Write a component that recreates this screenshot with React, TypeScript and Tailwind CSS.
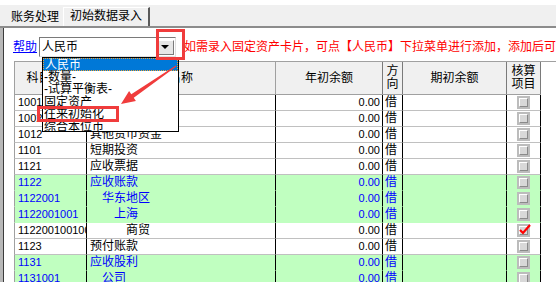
import React from "react";

type Row = {
  code: string;
  name: string;
  indent: number;
  green: boolean;
  checked?: boolean;
};

const rows: Row[] = [
  { code: "1001", name: "现金", indent: 0, green: false },
  { code: "1002", name: "银行存款", indent: 0, green: false },
  { code: "1012", name: "其他货币资金", indent: 0, green: false },
  { code: "1101", name: "短期投资", indent: 0, green: false },
  { code: "1121", name: "应收票据", indent: 0, green: false },
  { code: "1122", name: "应收账款", indent: 0, green: true },
  { code: "1122001", name: "华东地区", indent: 1, green: true },
  { code: "1122001001", name: "上海", indent: 2, green: true },
  { code: "112200100100", name: "商贸", indent: 3, green: false, checked: true },
  { code: "1123", name: "预付账款", indent: 0, green: false },
  { code: "1131", name: "应收股利", indent: 0, green: true },
  { code: "1131001", name: "公司", indent: 1, green: true },
];

const indentClass = ["pl-[3px]", "pl-[15px]", "pl-[27px]", "pl-[39px]"];

const options = ["人民币", "-数量-", "-试算平衡表-", "固定资产", "往来初始化", "综合本位币"];

function CheckBox({ checked }: { checked?: boolean }) {
  return (
    <div className="w-[13px] h-[13px] bg-[#bcbcbc] p-[2px]">
      <div className="relative w-full h-full bg-[#d8d8d8] border-t border-l border-t-white border-l-white border-b border-r border-b-[#8a8a8a] border-r-[#8a8a8a]">
        {checked && (
          <svg className="absolute -left-[1px] -top-[3px]" width="12" height="11" viewBox="0 0 12 11">
            <path d="M1 6 L4 9 L11 1" fill="none" stroke="#ff0000" strokeWidth="2.2" />
          </svg>
        )}
      </div>
    </div>
  );
}

export default function App() {
  return (
    <div className="relative w-[556px] h-[282px] overflow-hidden bg-white text-[12px] text-black font-['Liberation_Sans','Noto_Sans_CJK_SC',sans-serif]">
      {/* Tabs */}
      <div className="h-[5px] bg-white" />
      <div className="h-[23px] bg-[#f0f0f0] border-b-2 border-[#8c8c8c] flex items-end pl-[3px]">
        <div className="h-[16px] w-[60px] pl-[8px] leading-[14px]">账务处理</div>
        <div className="h-[19px] w-[87px] pl-[6px] leading-[16px] border-l border-t border-white border-r-2 border-r-[#5a5a5a]">
          初始数据录入
        </div>
      </div>

      <div className="flex">
        {/* window left edge */}
        <div className="w-[4px] h-[260px] flex">
          <div className="w-[3px] bg-[#b8b8b8]" />
          <div className="w-[1px] bg-[#3c3c3c]" />
        </div>

        <div className="flex-1">
          {/* toolbar */}
          <div className="h-[33px] flex items-start pt-[9px] whitespace-nowrap">
            <a className="ml-[9px] mt-[3px] text-[#0000ff] underline leading-[14px]">帮助</a>
            <div className="ml-[2px] w-[137px] h-[20px] border border-t-[#7a7a7a] border-l-[#7a7a7a] border-b-[#e0e0e0] border-r-[#e0e0e0] bg-white flex items-center">
              <span className="pl-[2px] flex-1 leading-[14px]">人民币</span>
              <div className="w-[18px] h-[15px] mr-[1px] bg-[#e6e6e6] border border-t-white border-l-white border-b-[#7a7a7a] border-r-[#7a7a7a] flex items-center justify-center">
                <div className="w-0 h-0 border-l-[4px] border-r-[4px] border-t-[4px] border-l-transparent border-r-transparent border-t-black" />
              </div>
            </div>
            <span className="ml-[8px] mt-[3px] text-[#ff0000] leading-[14px]">
              如需录入固定资产卡片，可点【人民币】下拉菜单进行添加，添加后可在此录入
            </span>
          </div>

          {/* grid */}
          <div className="ml-[10px] border-t border-[#a0a0a0]">
            <div className="grid grid-cols-[73px_189px_107px_20px_104px_34px] h-[33px] bg-[#f0f0f0] border-b border-[#a0a0a0] w-[527px]">
              <div className="border-l border-[#a0a0a0] border-r flex items-center justify-center">科目编码</div>
              <div className="border-r border-[#a0a0a0] flex items-center justify-center">名称</div>
              <div className="border-r border-[#7a7a7a] flex items-center justify-center">年初余额</div>
              <div className="border-r border-[#7a7a7a] flex flex-col items-center justify-center leading-[13px]">
                <span>方</span>
                <span>向</span>
              </div>
              <div className="border-r border-[#7a7a7a] flex items-center justify-center">期初余额</div>
              <div className="border-r border-[#7a7a7a] flex flex-col items-center justify-center leading-[13px]">
                <span>核算</span>
                <span>项目</span>
              </div>
            </div>

            {rows.map((r) => {
              const tone = r.green ? "bg-[#c0ffc0] text-[#0000ff]" : "bg-white text-black";
              const line = r.green ? "border-b border-b-[#c0ffc0]" : "border-b border-b-[#c0c0c0]";
              return (
                <div
                  key={r.code}
                  className={`grid grid-cols-[73px_189px_107px_20px_104px_34px] h-[16px] w-[527px] leading-[15px] ${tone}`}
                >
                  <div className={`border-l border-[#a0a0a0] border-r border-r-black ${line} pl-[3px] text-[11px] overflow-hidden whitespace-nowrap`}>
                    {r.code}
                  </div>
                  <div className={`border-r border-r-black ${line} whitespace-nowrap ${indentClass[r.indent]}`}>
                    {r.name}
                  </div>
                  <div className={`border-r border-r-black ${line} text-right pr-[2px] text-[11px]`}>0.00</div>
                  <div className={`border-r border-r-black ${line} pl-[2px]`}>借</div>
                  <div className={`border-r border-r-black ${line}`} />
                  <div className={`border-r border-r-black ${line} flex items-center justify-center`}>
                    <CheckBox checked={r.checked} />
                  </div>
                </div>
              );
            })}
          </div>
        </div>
      </div>

      {/* open dropdown list */}
      <div className="absolute left-[42px] top-[57px] w-[137px] h-[75px] overflow-hidden bg-white border border-black">
        {options.map((o, i) => (
          <div
            key={o}
            className={`h-[12.5px] leading-[12px] pl-[1px] whitespace-nowrap ${
              i === 0 ? "bg-[#0078d7] text-white border border-dotted border-[#f0a030]" : ""
            }`}
          >
            {o}
          </div>
        ))}
      </div>

      {/* red annotations */}
      <div className="absolute left-[156px] top-[29px] w-[29px] h-[31px] border-[3px] border-[#f03c3c]" />
      <div className="absolute left-[37px] top-[106px] w-[82px] h-[16px] border-[3px] border-[#f03c3c]" />
      <svg className="absolute left-[115px] top-[60px]" width="66" height="50" viewBox="0 0 66 50">
        <polygon
          points="61.3,6.4 18.75,37.8 20.9,40.9 6,44 14.1,31.1 16.25,34.2 60.7,5.6"
          fill="#f03c3c"
        />
      </svg>
    </div>
  );
}
